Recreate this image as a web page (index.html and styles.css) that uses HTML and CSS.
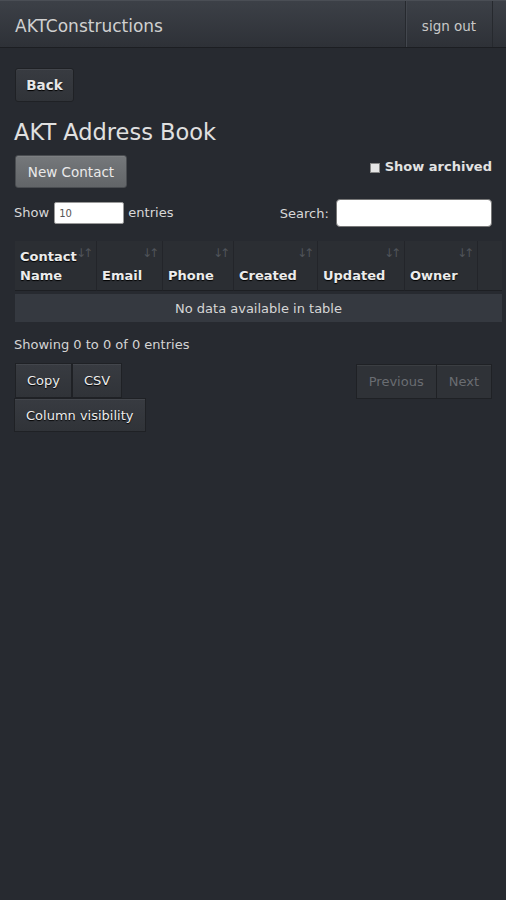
FILE: index.html
```html
<!DOCTYPE html>
<html lang="en">

<head>
    <meta charset="UTF-8">
    <meta name="viewport" content="width=device-width, initial-scale=1.0">
    <title>AKT Address Book</title>
    <link rel="stylesheet" href="styles.css">
</head>

<body>
    <div class="navbar">
        <div class="brand">AKTConstructions</div>
        <div class="nav-right">
            <a class="nav-link" href="#">sign out</a>
        </div>
    </div>

    <div class="container">
        <button class="btn btn-back">Back</button>
        <h1>AKT Address Book</h1>

        <div class="toolbar">
            <button class="btn btn-new">New Contact</button>
            <label class="archived"><span class="check"></span>Show archived</label>
        </div>

        <div class="table-controls">
            <div class="length">Show <input type="text" value="10" class="length-input"> entries</div>
            <div class="search">Search: <input type="text" class="search-input"></div>
        </div>

        <table class="contacts">
            <thead>
                <tr>
                    <th class="col-name">Contact Name<span class="sort">&#8595;&#8593;</span></th>
                    <th class="col-email">Email<span class="sort">&#8595;&#8593;</span></th>
                    <th class="col-phone">Phone<span class="sort">&#8595;&#8593;</span></th>
                    <th class="col-created">Created<span class="sort">&#8595;&#8593;</span></th>
                    <th class="col-updated">Updated<span class="sort">&#8595;&#8593;</span></th>
                    <th class="col-owner">Owner<span class="sort">&#8595;&#8593;</span></th>
                    <th class="col-extra"></th>
                </tr>
            </thead>
            <tbody>
                <tr>
                    <td colspan="7" class="empty">No data available in table</td>
                </tr>
            </tbody>
        </table>

        <div class="info">Showing 0 to 0 of 0 entries</div>

        <div class="footer-row">
            <div class="export">
                <div class="btn-group">
                    <button class="btn btn-flat">Copy</button>
                    <button class="btn btn-flat">CSV</button>
                </div>
                <div class="btn-group">
                    <button class="btn btn-flat">Column visibility</button>
                </div>
            </div>
            <div class="paging">
                <button class="btn btn-page">Previous</button>
                <button class="btn btn-page">Next</button>
            </div>
        </div>
    </div>
</body>

</html>
```

FILE: styles.css
```css
body {
    margin: 0;
    background: #272a30;
    color: #d8d8d8;
    font-family: 'DejaVu Sans', 'Liberation Sans', sans-serif;
    font-size: 13px;
}

.navbar {
    display: flex;
    height: 46px;
    background: linear-gradient(to bottom, #3c4047, #2e3137);
    border-top: 1px solid #4a4e55;
    border-bottom: 1px solid #1c1e22;
}

.brand {
    flex: 1;
    padding: 2px 15px 0;
    line-height: 46px;
    font-size: 17px;
    color: #d0d0d0;
}

.nav-right {
    display: flex;
    border-left: 1px solid #26292e;
    box-shadow: inset 1px 0 0 #43474e;
    width: 86px;
    border-right: 1px solid #26292e;
    margin-right: 13px;
}

.nav-link {
    display: block;
    width: 100%;
    padding-top: 2px;
    text-align: center;
    line-height: 46px;
    font-size: 13.5px;
    color: #c8c8c8;
    text-decoration: none;
}

.container {
    padding: 20px 14px 0 15px;
}

.btn {
    font-family: inherit;
    font-size: 13.5px;
    color: #e6e6e6;
    background: linear-gradient(to bottom, #383b41, #303338);
    border: 1px solid #1f2125;
    border-radius: 3px;
    box-shadow: inset 0 1px 0 rgba(255, 255, 255, 0.06);
    cursor: pointer;
    padding: 0 14px;
    height: 34px;
}

.btn-back {
    display: block;
    width: 59px;
    padding: 0;
    font-weight: bold;
    text-shadow: 0 1px 1px #000;
}

h1 {
    margin: 16px 0 9px -1px;
    font-size: 22.5px;
    font-weight: normal;
    line-height: 28px;
    color: #e0e0e0;
}

.toolbar {
    display: flex;
    justify-content: space-between;
    align-items: flex-start;
}

.btn-new {
    width: 112px;
    height: 33px;
    padding: 0;
    color: #eaeaea;
    background: linear-gradient(to bottom, #75787b, #626568);
    border-color: #4a4d51;
}

.archived {
    display: flex;
    align-items: center;
    margin-top: 4px;
    font-weight: bold;
    font-size: 13px;
    color: #e2e2e2;
}

.check {
    width: 8px;
    height: 8px;
    margin-right: 5px;
    margin-top: 2px;
    background: #e6e6e6;
    border: 1px solid #888;
}

.table-controls {
    display: flex;
    justify-content: space-between;
    align-items: center;
    margin-top: 11px;
    margin-left: -1px;
}

.length-input {
    width: 60px;
    height: 16px;
    padding: 2px 4px;
    margin: 0 0 0 1px;
    font-family: inherit;
    font-size: 10px;
    color: #555;
    border: 1px solid #999;
    border-radius: 2px;
}

.search-input {
    width: 146px;
    height: 22px;
    padding: 2px 4px;
    margin-left: 3px;
    border: 1px solid #777;
    border-radius: 4px;
}

.contacts {
    width: 487px;
    margin-top: 11px;
    border-collapse: separate;
    border-spacing: 0 3px;
    table-layout: fixed;
}

.contacts th {
    position: relative;
    text-align: left;
    vertical-align: bottom;
    padding: 6px 5px 5px 5px;
    height: 48px;
    box-sizing: border-box;
    font-size: 13px;
    line-height: 19px;
    color: #ececec;
    text-shadow: 0 1px 1px #000;
    background: #2b2e33;
    border-right: 1px solid #23252a;
    border-bottom: 1px solid #1d1f23;
}

.contacts th:last-child {
    border-right: none;
}

.sort {
    position: absolute;
    top: 5px;
    right: 6px;
    font-size: 12px;
    line-height: 14px;
    font-weight: normal;
    letter-spacing: -3px;
    color: #50545a;
    text-shadow: none;
}

.col-name { width: 82px; }
.col-email { width: 66px; }
.col-phone { width: 71px; }
.col-created { width: 84px; }
.col-updated { width: 87px; }
.col-owner { width: 73px; }
.col-extra { width: 24px; }

.empty {
    height: 28px;
    padding: 0;
    text-align: center;
    background: #353940;
    color: #d6d6d6;
    font-size: 13px;
}

.info {
    margin-top: 12px;
    margin-left: -1px;
    color: #d4d4d4;
}

.footer-row {
    display: flex;
    justify-content: space-between;
    align-items: flex-start;
    margin-top: 11px;
}

.btn-group {
    display: flex;
}

.btn-flat {
    height: 35px;
    padding: 0 11px;
    border-radius: 0;
    font-size: 13px;
    color: #ededed;
    text-shadow: 0 1px 1px #000;
}

.btn-group + .btn-group .btn-flat {
    margin-left: -1px;
    height: 34px;
}

.paging {
    display: flex;
    margin-top: 1px;
}

.btn-page {
    height: 35px;
    padding: 0 12px;
    border-radius: 0;
    color: #6a6d72;
    font-size: 13px;
    background: #2f3237;
}

.btn-page + .btn-page {
    margin-left: -1px;
}
```
